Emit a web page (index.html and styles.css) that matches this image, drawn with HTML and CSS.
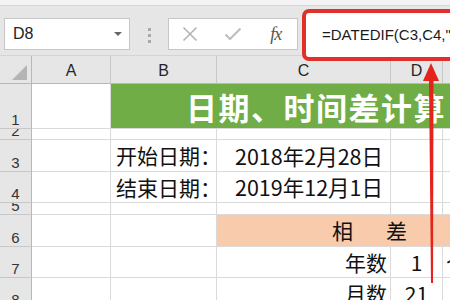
FILE: index.html
```html
<!DOCTYPE html>
<html>

<head>
    <meta charset="UTF-8">
    <title>日期、时间差计算</title>
    <link rel="stylesheet" href="styles.css">
</head>

<body>
    <div class="ribbon-edge"></div>

    <div class="toolbar">
        <div class="namebox">D8<span class="drop"></span></div>
        <div class="grip"><i></i><i></i><i></i></div>
        <div class="funcbox">
            <span class="btn">
                <svg width="16" height="16" viewBox="0 0 16 16"><path d="M1.5 1.5L14.5 14.5M14.5 1.5L1.5 14.5" stroke="#b3b3b3" stroke-width="1.6" fill="none"/></svg>
            </span>
            <span class="btn">
                <svg width="18" height="14" viewBox="0 0 18 14"><path d="M1.5 7.5L6 12L16.5 1.5" stroke="#bdbdbd" stroke-width="2" fill="none"/></svg>
            </span>
            <span class="btn fx">fx</span>
        </div>
        <!-- red frame = annotation in the screenshot -->
        <div class="formula">=DATEDIF(C3,C4,"</div>
    </div>

    <div class="sheet">
        <div class="corner"><span class="tri"></span></div>
        <div class="ch">A</div>
        <div class="ch">B</div>
        <div class="ch">C</div>
        <div class="ch">D</div>
        <div class="ch">E</div>

        <div class="rh">1</div>
        <div class="c"></div>
        <div class="c title">日期、时间差计算</div>

        <div class="rh">2</div>
        <div class="c"></div><div class="c"></div><div class="c"></div><div class="c"></div><div class="c"></div>

        <div class="rh">3</div>
        <div class="c"></div>
        <div class="c label">开始日期：</div>
        <div class="c date">2018年2月28日</div>
        <div class="c"></div><div class="c"></div>

        <div class="rh">4</div>
        <div class="c"></div>
        <div class="c label">结束日期：</div>
        <div class="c date">2019年12月1日</div>
        <div class="c"></div><div class="c"></div>

        <div class="rh">5</div>
        <div class="c"></div><div class="c"></div><div class="c"></div><div class="c"></div><div class="c"></div>

        <div class="rh">6</div>
        <div class="c"></div><div class="c"></div>
        <div class="c diff">相　差</div>

        <div class="rh">7</div>
        <div class="c"></div><div class="c"></div>
        <div class="c unit">年数</div>
        <div class="c num">1</div>
        <div class="c extra">个</div>

        <div class="rh">8</div>
        <div class="c"></div><div class="c"></div>
        <div class="c unit">月数</div>
        <div class="c num">21</div>
        <div class="c"></div>
    </div>

    <svg class="arrow" width="450" height="300" viewBox="0 0 450 300">
        <polygon points="429,79 433.5,79 433,283 431,283" fill="#e3241c"/>
        <polygon points="431,63 439,81 423,81" fill="#e3241c"/>
    </svg>
</body>

</html>
```

FILE: styles.css
```css
html,
body {
    margin: 0;
    width: 450px;
    height: 300px;
    overflow: hidden;
    background: #e6e6e6;
}

body {
    position: relative;
    font-family: "Liberation Sans", sans-serif;
}

.ribbon-edge {
    height: 5px;
    background: #f3f3f3;
    border-bottom: 1px solid #d6d6d6;
}

/* formula bar */

.toolbar {
    display: flex;
    align-items: flex-start;
    height: 49px;
    border-bottom: 1px solid #d4d4d4;
    background: #e6e6e6;
}

.namebox {
    position: relative;
    box-sizing: border-box;
    flex: none;
    width: 126px;
    height: 32px;
    margin: 12px 0 0 4px;
    padding-left: 8px;
    background: #fff;
    border: 1px solid #c6c6c6;
    font-size: 16px;
    line-height: 30px;
    color: #222;
}

.drop {
    position: absolute;
    right: 7px;
    top: 13px;
    border-left: 4px solid transparent;
    border-right: 4px solid transparent;
    border-top: 4px solid #666;
}

.grip {
    display: flex;
    flex-direction: column;
    gap: 3px;
    flex: none;
    margin: 22px 17px 0 18px;
}

.grip i {
    width: 3px;
    height: 3px;
    background: #a8a8a8;
}

.funcbox {
    display: flex;
    box-sizing: border-box;
    flex: none;
    width: 130px;
    height: 32px;
    margin-top: 12px;
    background: #fff;
    border: 1px solid #c6c6c6;
}

.btn {
    flex: 1;
    display: flex;
    align-items: center;
    justify-content: center;
}

.fx {
    font: italic 18px "Liberation Serif", serif;
    color: #555;
    letter-spacing: -1px;
}

.formula {
    position: relative; /* only for z-index, so the frame sits over the column headers */
    z-index: 1;
    box-sizing: border-box;
    flex: none;
    width: 200px;
    height: 52px;
    margin: 3px 0 0 4px;
    padding-left: 16px;
    background: #fff;
    border: 4px solid #e0302a;
    border-radius: 7px;
    font-size: 15px;
    line-height: 44px;
    color: #1a1a1a;
    white-space: nowrap;
}

/* sheet */

.sheet {
    display: grid;
    grid-template-columns: 32px 79px 106px 174px 52px 80px;
    grid-template-rows: 28px 45px 11px 32px 31px 12px 32px 31px 31px;
    background: #fff;
    font-family: "Noto Sans CJK SC", sans-serif;
    font-size: 21px;
    color: #111;
}

.corner,
.ch,
.rh {
    background: #e6e6e6;
    box-sizing: border-box;
    overflow: hidden;
}

.corner {
    position: relative;
    border-right: 1px solid #b8b8b8;
    border-bottom: 1px solid #b8b8b8;
}

.tri {
    position: absolute;
    right: 4px;
    bottom: 3px;
    border-left: 15px solid transparent;
    border-bottom: 15px solid #b4b4b4;
}

.ch {
    display: flex;
    align-items: flex-end;
    justify-content: center;
    padding-bottom: 3px;
    border-right: 1px solid #c8c8c8;
    border-bottom: 1px solid #b8b8b8;
    font: 16px "Liberation Sans", sans-serif;
    color: #262626;
}

.rh {
    display: flex;
    align-items: flex-end;
    justify-content: center;
    border-right: 1px solid #b8b8b8;
    border-bottom: 1px solid #c8c8c8;
    font: 15px/17px "Liberation Sans", sans-serif;
    color: #333;
}

.c {
    display: flex;
    align-items: center;
    box-sizing: border-box;
    overflow: hidden;
    white-space: nowrap;
    line-height: 1;
    border-right: 1px solid #dadada;
    border-bottom: 1px solid #dadada;
}

.title {
    grid-column: 3 / -1;
    padding-left: 75px;
    background: #70ad47;
    border-right: none;
    font-size: 31px;
    font-weight: 700;
    letter-spacing: 1.5px;
    color: #fff;
}

.label {
    padding-left: 5px;
}

.date {
    justify-content: flex-end;
    padding-right: 7px;
    font-size: 21.5px;
}

.diff {
    grid-column: 4 / -1;
    padding-left: 115px;
    background: #f8cbad;
    border-right: none;
    letter-spacing: 6px;
}

.unit {
    justify-content: flex-end;
    padding-right: 3px;
}

.num {
    justify-content: center;
}

.extra {
    padding-left: 3px;
}

.arrow {
    position: absolute;
    left: 0;
    top: 0;
    pointer-events: none;
}
```
